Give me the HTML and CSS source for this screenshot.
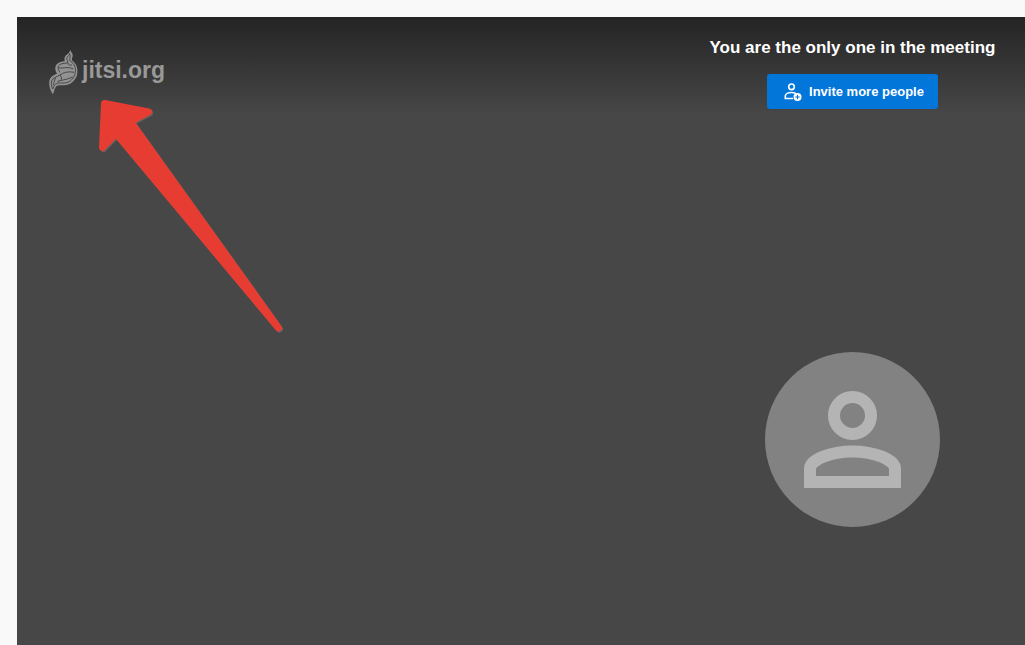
FILE: index.html
```
<!DOCTYPE html>
<html lang="en">
<head>
  <meta charset="UTF-8">
  <meta name="viewport" content="width=device-width, initial-scale=1.0">
  <title>Meeting</title>
  <link rel="stylesheet" href="styles.css">
</head>
<body>
  <main class="room">
    <a class="logo" href="#">
      <svg class="logo-mark" viewBox="0 0 90 138" aria-hidden="true">
        <path class="mark-body" d="M67 2C69 10 75 12 74 22C73 28 70 30 73 35C84 42 90 56 88 72C86 92 68 110 46 109C38 109 30 108 25 112C19 118 19 126 15 136C8 126 2 112 4 96C6 84 16 78 27 74C22 66 19 56 26 46C32 39 42 38 50 36C48 28 50 20 58 16C63 12 65 8 67 2Z"/>
        <path class="mark-line" d="M65 14C66 20 55 22 56 29C57 34 62 36 58 42C48 43 36 43 31 51C28 60 34 66 36 70M65 14C70 24 62 30 67 36C80 44 84 58 82 70C79 88 66 102 48 102C38 102 28 100 20 108C16 114 16 116 14 120C10 110 9 104 11 96C14 86 26 84 36 78C44 72 58 66 78 70M31 55C40 62 58 50 76 60M22 86C20 96 18 100 16 108M36 78C42 86 42 90 38 94M28 98C38 92 54 94 74 84M60 42C60 48 66 51 72 47"/>
      </svg>
      <span class="logo-text">jitsi.org</span>
    </a>

    <section class="stage">
      <div class="invite">
        <h1>You are the only one in the meeting</h1>
        <button class="invite-button" type="button">
          <svg class="invite-icon" viewBox="0 0 18 18" aria-hidden="true">
            <circle cx="7.500" cy="3.800" r="2.800"/>
            <path d="M9 15.500H1.300V13C1.300 10.800 4.500 9.500 7.500 9.500C9 9.500 10.500 9.800 12 10.600"/>
            <circle class="badge" cx="13.500" cy="14" r="4"/>
            <path class="plus" d="M13.500 11.800V16.200M11.300 14H15.700"/>
          </svg>
          <span>Invite more people</span>
        </button>
      </div>
      <svg class="avatar" viewBox="0 0 175 175" role="img" aria-label="Participant">
        <circle class="avatar-bg" cx="87.500" cy="87.500" r="87.500"/>
        <circle class="avatar-line" cx="87.500" cy="63.500" r="18.500"/>
        <path class="avatar-line" d="M45 130V117C45 107.500 66 99.500 87.500 99.500C109 99.500 130 107.500 130 117V130Z"/>
      </svg>
    </section>

    <svg class="arrow" viewBox="0 0 200 250" aria-hidden="true">
      <path d="M14.500 13.500L58.500 22L40.500 31.500L188.500 238L26 43.500L12.500 57.500Z"/>
    </svg>
  </main>
</body>
</html>
```
FILE: styles.css
```
* {
  box-sizing: border-box;
}

body {
  margin: 0;
  padding: 17px 0 0 17px;
  background: #f9f9f9;
  font-family: "Liberation Sans", Arial, sans-serif;
}

.room {
  position: relative;
  display: flex;
  justify-content: space-between;
  align-items: flex-start;
  min-height: calc(100vh - 17px);
  overflow: hidden;
  background: linear-gradient(#242424, #474747 98px);
}

.logo {
  display: flex;
  align-items: center;
  gap: 4px;
  padding: 32px 0 0 31px;
  color: #999;
  font-size: 23px;
  font-weight: bold;
  line-height: 26px;
  text-decoration: none;
}

.logo-mark {
  width: 30px;
  height: 46px;
}

.logo-text {
  padding-bottom: 4px;
}

.mark-body {
  fill: #929292;
}

.mark-line {
  fill: none;
  stroke: #484848;
  stroke-width: 3;
}

.stage {
  display: flex;
  flex-direction: column;
  align-items: center;
  gap: 243px;
  width: 345px;
  padding: 20px 0;
}

.invite {
  display: flex;
  flex-direction: column;
  align-items: center;
  gap: 15px;
}

h1 {
  margin: 0;
  color: #fff;
  font-size: 17px;
  line-height: 22px;
}

.invite-button {
  display: flex;
  align-items: center;
  gap: 7px;
  height: 35px;
  padding: 0 14px 0 17px;
  border: 0;
  border-radius: 3px;
  background: #0376da;
  color: #fff;
  font-family: inherit;
  font-size: 13px;
  font-weight: bold;
  cursor: pointer;
}

.invite-button:hover {
  background: #278adf;
}

.invite-icon {
  width: 18px;
  height: 18px;
  fill: none;
  stroke: #fff;
  stroke-width: 1.6;
}

.invite-icon .badge {
  fill: #fff;
  stroke: none;
}

.invite-icon .plus {
  stroke: #0376da;
  stroke-width: 1;
}

.avatar {
  width: 175px;
  height: 175px;
}

.avatar-bg {
  fill: #828282;
}

.avatar-line {
  fill: none;
  stroke: #b4b4b4;
  stroke-width: 12;
}

/* callout pointing at the logo */
.arrow {
  position: absolute;
  top: 73px;
  left: 73px;
  width: 200px;
  height: 250px;
  filter: drop-shadow(1px 1px 0 #626262);
  pointer-events: none;
}

.arrow path {
  fill: #e63c32;
  stroke: #e63c32;
  stroke-width: 7;
  stroke-linejoin: round;
}
```
